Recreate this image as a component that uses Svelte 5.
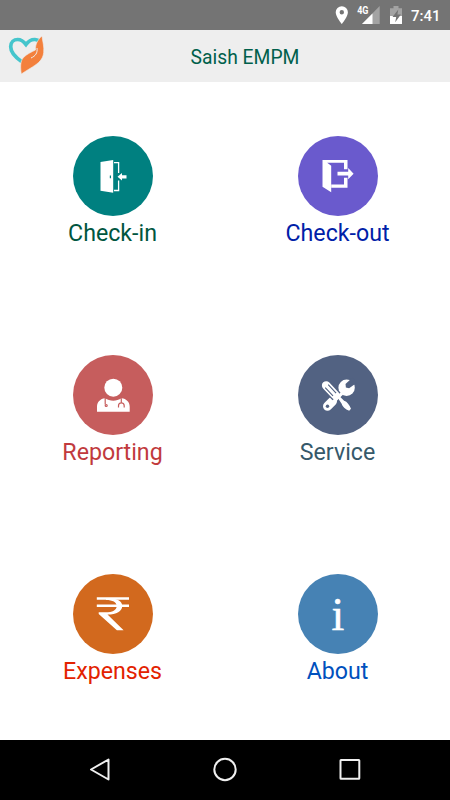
<script lang="ts">
	const title = 'Saish EMPM';
	const time = '7:41';

	const items = [
		{ id: 'checkin', label: 'Check-in' },
		{ id: 'checkout', label: 'Check-out' },
		{ id: 'reporting', label: 'Reporting' },
		{ id: 'service', label: 'Service' },
		{ id: 'expenses', label: 'Expenses' },
		{ id: 'about', label: 'About' }
	];
</script>

<div class="screen">
	<div class="status-bar">
		<svg class="status-icons" width="90" height="30" viewBox="0 0 90 30">
			<path fill="#fff" fill-rule="evenodd" d="M21.8 6.200a6.100 6.100 0 0 0-6.100 6.100c0 4.600 6.100 11.700 6.100 11.700s6.100-7.100 6.100-11.700a6.100 6.100 0 0 0-6.100-6.100zm0 3.900a2.200 2.200 0 1 1 0 4.400 2.200 2.200 0 0 1 0-4.400z" />
			<path fill="#a3a3a3" d="M59.7 6v18H42z" />
			<path fill="#747474" d="M36 4h14.300v11H36z" />
			<path fill="#fff" d="M52.500 13.400V24H42z" />
			<text x="37.200" y="14" class="network" textLength="11.300" lengthAdjust="spacingAndGlyphs">4G</text>
			<path fill="#a3a3a3" d="M73.500 6h5v2.200H82V16H70V8.200h3.500z" />
			<path fill="#fff" d="M70 16h12v8H70z" />
			<path fill="#747474" d="M78.300 9.500L72.500 17h3.700l-1 5.300 5.700-7.800h-3.500z" />
		</svg>
		<span class="time">{time}</span>
	</div>

	<header>
		<svg class="logo" width="40" height="42" viewBox="0 0 40 42">
			<path fill="none" stroke="#45c5cc" stroke-width="3.700" d="M13.500 26.500C7 22 2.700 17.500 2.700 11.800 2.700 7 6 4.500 9.700 4.500c3.500 0 6 2 8.300 5 2.500-3.500 5.500-5.200 9-5 2 .1 3.500.9 4.700 2.200" />
			<path fill="#f3803c" stroke="#eee" stroke-width=".6" d="M34 1c.5 5 2.400 11 1.700 16.500-.8 7-5 10.500-11.200 14.400-4 2.500-7.500 4.600-11.200 7.100-.8-6-1.500-12.500 2.200-16.500 3-3.200 8-5.500 12-7.500-.3-6 2.500-10.500 6.500-14z" />
			<path fill="none" stroke="#eee" stroke-width="1" d="M29 13c.7 5-1.500 8-6 10" />
		</svg>
		<h1>{title}</h1>
	</header>

	<main>
		{#each items as item}
			<div class="tile {item.id}">
				<svg class="circle" width="80" height="80" viewBox="0 0 80 80" fill="#fff">
					{#if item.id === 'checkin'}
						<path fill-rule="evenodd" d="M27.500 26L40.200 24v32.800L27.500 54.700zM36.800 39.500v2.800h1.200v-2.800z" />
						<path fill="none" stroke="#fff" stroke-width="1.300" d="M41 26.600h4.600v10.500M41 54.500h4.600V44.500" />
						<path d="M44.500 40.800l4.500-3.800v2.200h4.500v3.200H49v2.200z" />
					{:else if item.id === 'checkout'}
						<path d="M24.500 24h25v9.300H46V26.700H29.200l4 3v26.600l-8.700-5.600z" />
						<path d="M33.200 48.400H46v-6.700h3.500v10H33.200z" />
						<path d="M39.500 35.800h10.700V32l5.400 5.700-5.400 5.600v-3.900H39.500z" />
					{:else if item.id === 'reporting'}
						<circle cx="40.300" cy="32.700" r="9" />
						<path d="M24 56.700v-5c0-4.800 3.300-8 8-8.500 5 3.300 11.500 3.300 16.500 0 4.900.5 8.200 3.700 8.200 8.500v5z" />
						<g fill="none" class="stethoscope">
							<path d="M32.200 43v6.500M48.300 43.200v4.500M45.500 52.500v-1.700c0-4 5.700-4 5.700 0v1.700" />
							<circle cx="33.200" cy="50.500" r="1" />
						</g>
					{:else if item.id === 'service'}
						<!-- spanner -->
						<path class="spanner-shaft" d="M36 44.300l9.500-9.500" />
						<path class="spanner-grip" d="M34.500 46.300l-5 5" />
						<circle cx="48.600" cy="32.700" r="8.200" />
						<path class="cut" d="M54.500 22.500l-7 6.500.4 3.400 3.200.8 7.400-5.200z" />
						<circle class="cut" cx="29.500" cy="51.300" r="1.700" />
						<!-- screwdriver -->
						<path class="driver-gap" d="M28.200 30.500l10.300 10.900" />
						<path class="driver-handle" d="M28.200 30.500l9.300 9.900" />
						<path class="grooves" d="M27.200 32.600l7.800 8.300M30.200 29.700l7.900 8.400" />
						<path class="driver-gap-thin" d="M41.500 43.500l8.500 9" />
						<path d="M40 43.200l1.800-1.600 4.300 4.200c3.100 1 5.300 4 6.900 8l-1.800 2c-4-1.500-6.800-3.900-7.700-7.300z" />
					{:else if item.id === 'expenses'}
						<path d="M23.800 23.300h32.200v2.400H23.800zM23.800 30.600h32.200V33H23.800z" />
						<path fill-rule="evenodd" d="M33 25h9c4.500 1 7.200 3.500 7.200 7 0 5.400-5.700 8.500-14.700 8.600L50.600 56.300h-6.700L25.700 40v-1.700h6.700c7.200 0 11.300-2.200 11.300-6.300 0-3.700-4-6-10.700-6z" />
					{:else}
						<text x="40" y="56.300" class="info">i</text>
					{/if}
				</svg>
				<span class="label">{item.label}</span>
			</div>
		{/each}
	</main>

	<nav>
		<svg width="24" height="26" viewBox="0 0 24 26"><path d="M20.500 2.500v20L3 12.500z" /></svg>
		<svg width="26" height="26" viewBox="0 0 26 26"><circle cx="13" cy="12.500" r="10.700" /></svg>
		<svg width="24" height="26" viewBox="0 0 24 26"><rect x="2.500" y="3" width="18.800" height="18.800" rx=".5" /></svg>
	</nav>
</div>

<style>
	:global(body) {
		margin: 0;
		background: #fff;
	}
	.screen {
		display: flex;
		flex-direction: column;
		width: 450px;
		height: 800px;
		font-family: Roboto, sans-serif;
		background: #fff;
	}
	.status-bar {
		display: flex;
		align-items: center;
		height: 30px;
		flex: none;
		padding-left: 320px;
		background: #747474;
		color: #fff;
	}
	.status-icons {
		flex: none;
	}
	.network {
		font-size: 10px;
		font-weight: 700;
		fill: #fff;
	}
	.time {
		font-size: 15px;
		font-weight: 500;
		line-height: 28px;
		padding: 2px 0 0 1px;
		height: 28px;
	}
	header {
		display: grid;
		grid-template-columns: 40px 1fr;
		align-items: center;
		flex: 0 0 52.4px;
		box-sizing: border-box;
		padding: 0 8px;
		background: #eee;
	}
	h1 {
		margin: 0;
		padding-top: 3px;
		text-align: center;
		font-size: 19.3px;
		font-weight: 400;
		color: #00604b;
	}
	main {
		flex: 1;
		display: grid;
		grid-template-columns: 1fr 1fr;
		grid-template-rows: repeat(3, 1fr);
	}
	.tile {
		display: flex;
		flex-direction: column;
		align-items: center;
		justify-content: center;
	}
	.circle {
		flex: none;
		border-radius: 50%;
	}
	.label {
		font-size: 23.2px;
		line-height: 30px;
		padding-top: 2px;
	}
	.checkin .circle { background: #008080; }
	.checkin .label { color: #00563f; }
	.checkout .circle { background: #6a5acd; }
	.checkout .label { color: #0020a8; }
	.reporting .circle { background: #c65d5d; }
	.reporting .label { color: #c13a3d; }
	.service .circle { background: #526282; }
	.service .label { color: #36596a; }
	.expenses .circle { background: #d2691e; }
	.expenses .label { color: #e32200; }
	.about .circle { background: #4682b4; }
	.about .label { color: #0050bd; }
	.stethoscope {
		stroke: #c65d5d;
		stroke-width: 1.2;
	}
	.spanner-shaft {
		stroke: #fff;
		stroke-width: 6;
	}
	.spanner-grip {
		stroke: #fff;
		stroke-width: 9;
		stroke-linecap: round;
	}
	.cut {
		fill: #526282;
	}
	.driver-gap {
		stroke: #526282;
		stroke-width: 11;
	}
	.driver-gap-thin {
		stroke: #526282;
		stroke-width: 5;
	}
	.driver-handle {
		stroke: #fff;
		stroke-width: 8.6;
		stroke-linecap: round;
	}
	.grooves {
		fill: none;
		stroke: #526282;
		stroke-width: 1.1;
	}
	.info {
		font-family: "Liberation Serif", serif;
		font-size: 46px;
		text-anchor: middle;
		stroke: #fff;
		stroke-width: 0.5;
	}
	nav {
		display: flex;
		align-items: center;
		justify-content: space-between;
		flex: 0 0 60px;
		box-sizing: border-box;
		padding: 0 88px;
		background: #000;
	}
	nav svg {
		fill: none;
		stroke: #f0f0f0;
		stroke-width: 2;
		stroke-linejoin: round;
	}
</style>
